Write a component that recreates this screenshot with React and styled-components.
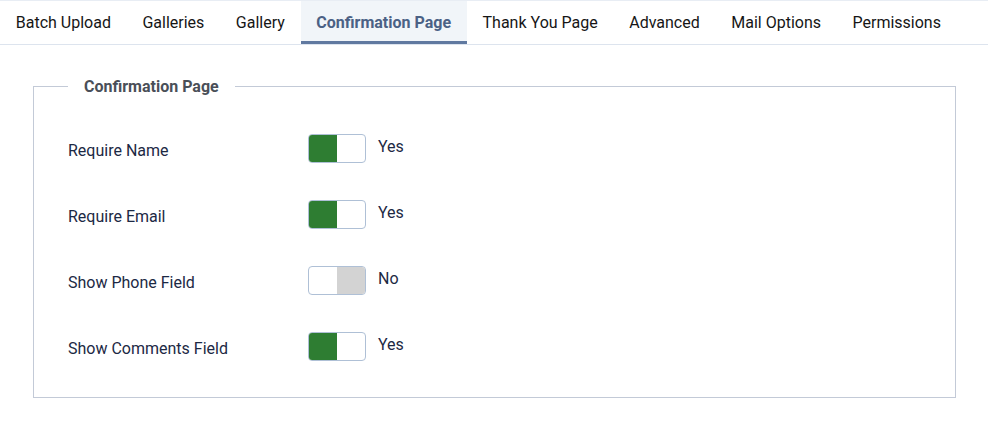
import styled, { createGlobalStyle } from 'styled-components';

const GlobalStyle = createGlobalStyle`
  body {
    margin: 0;
    background: #fff;
    font-family: Roboto, "Liberation Sans", sans-serif;
  }
`;

const TabBar = styled.nav`
  display: flex;
  border-top: 1px solid #e8edf4;
  border-bottom: 1px solid #dde4ee;
`;

const Tab = styled.div`
  height: 38px;
  padding: 2px 15.75px 0;
  display: flex;
  align-items: center;
  font-size: 16px;
  font-weight: ${({ active }) => (active ? 700 : 400)};
  color: ${({ active }) => (active ? '#4b6185' : '#161616')};
  background: ${({ active }) => (active ? '#f1f5f9' : 'transparent')};
  border-bottom: 3px solid ${({ active }) => (active ? '#6079a0' : 'transparent')};
  white-space: nowrap;
`;

const Fieldset = styled.fieldset`
  margin: 32px 32px 0 33px;
  padding: 38px 34px 36px;
  border: 1px solid #c3cad7;
  min-width: 0;
`;

const Legend = styled.legend`
  padding: 0 16px;
  font-size: 16px;
  font-weight: 700;
  line-height: 19px;
  color: #4a4f58;
`;

const Rows = styled.div`
  display: flex;
  flex-direction: column;
  gap: 37px;
`;

const Row = styled.div`
  display: flex;
  align-items: flex-start;
`;

const Label = styled.label`
  width: 240px;
  padding-top: 5px;
  font-size: 16px;
  line-height: 24px;
  color: #1c2944;
`;

const Switch = styled.span`
  box-sizing: border-box;
  display: flex;
  width: 58px;
  height: 29px;
  border: 1px solid #afc0d6;
  border-radius: 4px;
  overflow: hidden;
  background: #fff;
`;

const Half = styled.span`
  flex: 1;
  background: ${({ fill }) => fill || 'transparent'};
`;

const State = styled.span`
  margin-left: 12px;
  font-size: 16px;
  line-height: 26px;
  color: #1c2944;
`;

const tabs = [
  'Batch Upload',
  'Galleries',
  'Gallery',
  'Confirmation Page',
  'Thank You Page',
  'Advanced',
  'Mail Options',
  'Permissions',
];

const options = [
  { label: 'Require Name', on: true },
  { label: 'Require Email', on: true },
  { label: 'Show Phone Field', on: false },
  { label: 'Show Comments Field', on: true },
];

const Toggle = ({ on }) => (
  <Switch>
    <Half fill={on ? '#2e7d32' : null} />
    <Half fill={on ? null : '#d3d3d3'} />
  </Switch>
);

const App = () => (
  <>
    <GlobalStyle />
    <TabBar>
      {tabs.map((t) => (
        <Tab key={t} active={t === 'Confirmation Page'}>
          {t}
        </Tab>
      ))}
    </TabBar>
    <Fieldset>
      <Legend>Confirmation Page</Legend>
      <Rows>
        {options.map((o) => (
          <Row key={o.label}>
            <Label>{o.label}</Label>
            <Toggle on={o.on} />
            <State>{o.on ? 'Yes' : 'No'}</State>
          </Row>
        ))}
      </Rows>
    </Fieldset>
  </>
);

export default App;
